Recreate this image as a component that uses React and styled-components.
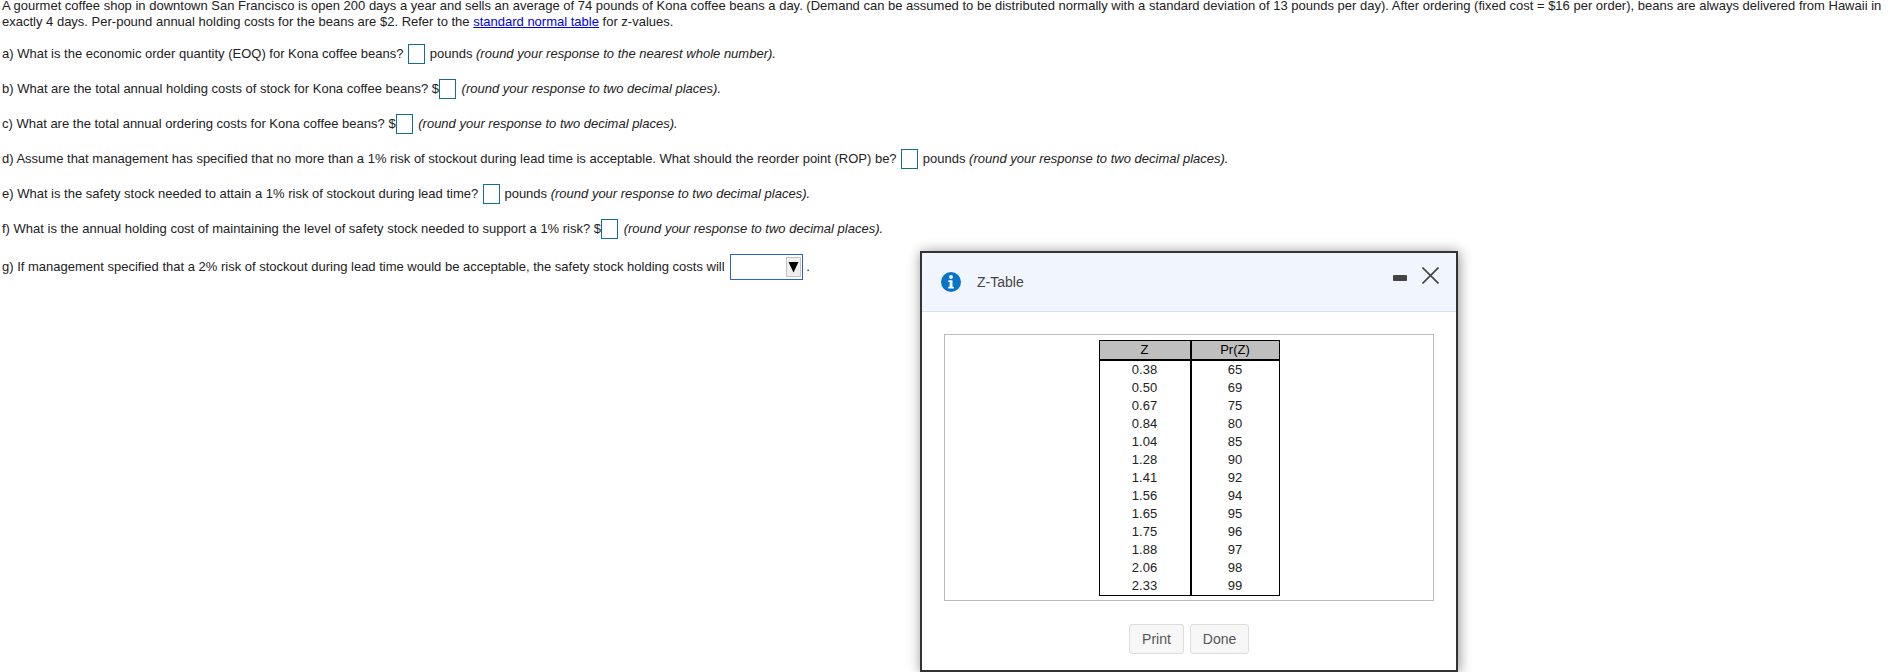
import React from 'react';
import styled, { createGlobalStyle } from 'styled-components';

const zRows = [
  ['0.38', '65'], ['0.50', '69'], ['0.67', '75'], ['0.84', '80'], ['1.04', '85'],
  ['1.28', '90'], ['1.41', '92'], ['1.56', '94'], ['1.65', '95'], ['1.75', '96'],
  ['1.88', '97'], ['2.06', '98'], ['2.33', '99'],
];

const App = () => {
  return (
    <>
      <GlobalStyle />
      <Page>
        <Intro>
          A gourmet coffee shop in downtown San Francisco is open 200 days a year and sells an average of 74 pounds of Kona coffee beans a day. (Demand can be assumed to be distributed normally with a standard deviation of 13 pounds per day). After ordering (fixed cost = $16 per order), beans are always delivered from Hawaii in exactly 4 days. Per-pound annual holding costs for the beans are $2. Refer to the <IntroLink href="#">standard normal table</IntroLink> for z-values.
        </Intro>
        <Questions>
          <Question>a) What is the economic order quantity (EOQ) for Kona coffee beans? <Answer /> pounds <em>(round your response to the nearest whole number).</em></Question>
          <Question>b) What are the total annual holding costs of stock for Kona coffee beans? $<Answer $tight /> <em>(round your response to two decimal places).</em></Question>
          <Question>c) What are the total annual ordering costs for Kona coffee beans? $<Answer $tight /> <em>(round your response to two decimal places).</em></Question>
          <Question>d) Assume that management has specified that no more than a 1% risk of stockout during lead time is acceptable. What should the reorder point (ROP) be? <Answer /> pounds <em>(round your response to two decimal places).</em></Question>
          <Question>e) What is the safety stock needed to attain a 1% risk of stockout during lead time? <Answer /> pounds <em>(round your response to two decimal places).</em></Question>
          <Question>f) What is the annual holding cost of maintaining the level of safety stock needed to support a 1% risk? $<Answer $tight /> <em>(round your response to two decimal places).</em></Question>
          <SelectQuestion>
            g) If management specified that a 2% risk of stockout during lead time would be acceptable, the safety stock holding costs will <Dropdown>
              <DropdownArrow>
                <svg width="11" height="12" viewBox="0 0 11 12"><path d="M0.5 1h10L5.5 11.5z" fill="#000" /></svg>
              </DropdownArrow>
            </Dropdown>.
          </SelectQuestion>
        </Questions>

        <Dialog>
          <DialogHeader>
            <DialogTitle>
              <svg width="20" height="20" viewBox="0 0 20 20">
                <circle cx="10" cy="10" r="10" fill="#0a74c9" />
                <circle cx="10" cy="5" r="1.9" fill="#fff" />
                <path d="M7.4 8.2h4.1v6.6h1.3v1.7H7.3v-1.7h1.3v-4.9H7.4z" fill="#fff" />
              </svg>
              <span>Z-Table</span>
            </DialogTitle>
            <WindowControls>
              <Minimize />
              <svg width="17" height="17" viewBox="0 0 17 17">
                <path d="M0.5 0.5l16 16M16.5 0.5l-16 16" stroke="#444" strokeWidth="1.6" fill="none" />
              </svg>
            </WindowControls>
          </DialogHeader>
          <DialogBody>
            <TableBox>
              <ZTable>
                <thead>
                  <tr>
                    <th>Z</th>
                    <th>Pr(Z)</th>
                  </tr>
                </thead>
                <tbody>
                  {zRows.map(([z, pr]) => (
                    <tr key={z}>
                      <td>{z}</td>
                      <td>{pr}</td>
                    </tr>
                  ))}
                </tbody>
              </ZTable>
            </TableBox>
            <ButtonRow>
              <DialogButton $width={55}>Print</DialogButton>
              <DialogButton $width={59}>Done</DialogButton>
            </ButtonRow>
          </DialogBody>
        </Dialog>
      </Page>
    </>
  );
};

export default App;

const GlobalStyle = createGlobalStyle`
  html, body {
    margin: 0;
    height: 672px;
    overflow: hidden;
    background: #fff;
  }
`;

const Page = styled.div`
  position: relative;
  height: 672px;
  padding: 0 2px;
  overflow: hidden;
  box-sizing: border-box;
  font-family: "Liberation Sans", Arial, sans-serif;
  font-size: 13px;
  color: #222;
`;

const Intro = styled.div`
  margin-top: -2px;
  line-height: 16px;
`;

const IntroLink = styled.a`
  color: #0000ee;
  text-decoration: underline;
`;

const Questions = styled.div`
  display: flex;
  flex-direction: column;
  gap: 15px;
  margin-top: 14px;
`;

const Question = styled.div`
  height: 20px;
  line-height: 20px;
  white-space: nowrap;
`;

const SelectQuestion = styled(Question)`
  height: 26px;
  line-height: 26px;
`;

const Answer = styled.input.attrs({ type: 'text' })`
  box-sizing: border-box;
  width: 17px;
  height: 20px;
  margin: 0 ${(p) => (p.$tight ? '2px 0 0' : '1px')};
  padding: 0;
  vertical-align: top;
  background: #fff;
  border: 1px solid #10718f;
`;

const Dropdown = styled.span`
  display: inline-flex;
  justify-content: flex-end;
  align-items: center;
  box-sizing: border-box;
  width: 73px;
  height: 26px;
  margin: 0 3px 0 2px;
  padding-right: 1px;
  vertical-align: top;
  background: #fff;
  border: 1px solid #2b62c9;
`;

const DropdownArrow = styled.span`
  display: flex;
  justify-content: center;
  align-items: center;
  width: 15px;
  height: 20px;
  background: #efefef;
  border: 1px solid #c4c4c4;
  box-sizing: border-box;
`;

const Dialog = styled.div`
  position: absolute;
  left: 920px;
  top: 251px;
  box-sizing: border-box;
  width: 538px;
  height: 421px;
  background: #fff;
  border: 2px solid #333;
  box-shadow: 1px 1px 12px rgba(0, 0, 0, 0.45);
  display: flex;
  flex-direction: column;
`;

const DialogHeader = styled.div`
  box-sizing: border-box;
  height: 59px;
  flex-shrink: 0;
  display: flex;
  justify-content: space-between;
  align-items: flex-start;
  background: #f1f6fe;
  border-bottom: 1px solid #d3e3f1;
  padding: 14px 17px 0 19px;
`;

const DialogTitle = styled.div`
  display: flex;
  align-items: center;
  gap: 16px;
  margin-top: 5px;
  font-size: 14px;
  color: #444;
`;

const WindowControls = styled.div`
  display: flex;
  align-items: center;
  gap: 15px;
`;

const Minimize = styled.span`
  display: block;
  width: 14px;
  height: 6px;
  margin-top: 4px;
  border-radius: 1px;
  background: #444;
`;

const DialogBody = styled.div`
  display: flex;
  flex-direction: column;
  padding: 22px 22px 0;
`;

const TableBox = styled.div`
  box-sizing: border-box;
  height: 267px;
  padding-top: 5px;
  display: flex;
  justify-content: center;
  border: 1px solid #bbb;
`;

const ZTable = styled.table`
  box-sizing: border-box;
  width: 181px;
  height: 256px;
  table-layout: fixed;
  border-collapse: separate;
  border-spacing: 0;
  border: 1px solid #000;
  text-align: center;
  line-height: 18px;

  th {
    height: 18px;
    padding: 0;
    font-weight: normal;
    color: #000;
    background: #bfbfbf;
    border-bottom: 2px solid #000;
  }

  th:first-child {
    width: 90px;
  }

  td {
    height: 18px;
    padding: 0;
  }

  th:first-child, td:first-child {
    border-right: 2px solid #000;
  }
`;

const ButtonRow = styled.div`
  display: flex;
  justify-content: center;
  gap: 6px;
  margin-top: 23px;
`;

const DialogButton = styled.button`
  box-sizing: border-box;
  width: ${(p) => p.$width}px;
  height: 30px;
  padding: 0;
  font-family: "Liberation Sans", Arial, sans-serif;
  font-size: 14px;
  color: #555;
  background: #f7f7f7;
  border: 1px solid #ddd;
  border-radius: 3px;
`;
